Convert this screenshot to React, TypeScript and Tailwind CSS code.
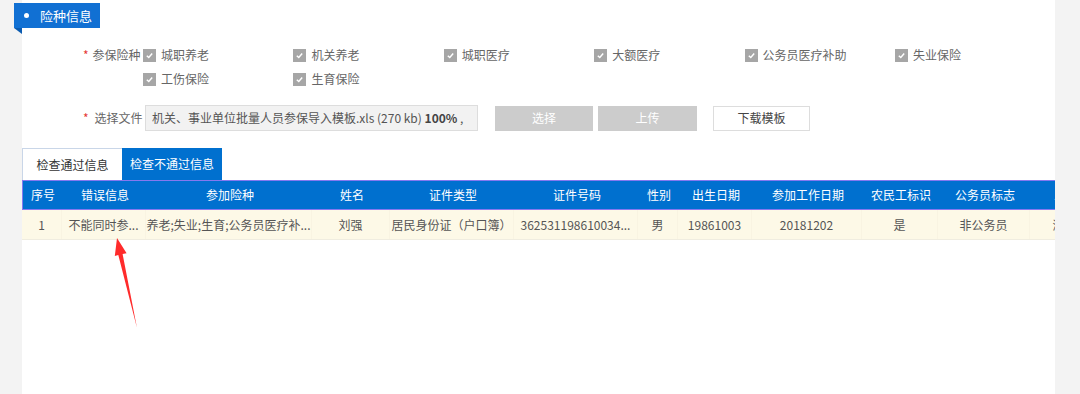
import React from 'react'

const kinds = ['城职养老', '机关养老', '城职医疗', '大额医疗', '公务员医疗补助', '失业保险', '工伤保险', '生育保险']

const cols = [
    { title: '序号', w: 'w-[40px]' },
    { title: '错误信息', w: 'w-[84px]' },
    { title: '参加险种', w: 'w-[166px]' },
    { title: '姓名', w: 'w-[78px]' },
    { title: '证件类型', w: 'w-[124px]' },
    { title: '证件号码', w: 'w-[124px]' },
    { title: '性别', w: 'w-[40px]' },
    { title: '出生日期', w: 'w-[74px]' },
    { title: '参加工作日期', w: 'w-[110px]' },
    { title: '农民工标识', w: 'w-[76px]' },
    { title: '公务员标志', w: 'w-[92px]' },
    { title: '人员类别', w: 'w-[94px]' },
]

const row = ['1', '不能同时参...', '养老;失业;生育;公务员医疗补...', '刘强', '居民身份证（户口簿）', '362531198610034...', '男', '19861003', '20181202', '是', '非公务员', '浏览详情']

const Check = ({ label }: { label: string }) => (
    <div className="flex items-center h-[24px]">
        <span className="w-[13px] h-[13px] bg-[#a6a6a6] flex items-center justify-center">
            <svg width="9" height="9" viewBox="0 0 10 10">
                <path d="M2 5.2 L4.2 7.3 L8 2.8" stroke="#fff" strokeWidth="1.6" fill="none" />
            </svg>
        </span>
        <span className="ml-[5px] text-[12px] text-[#666]">{label}</span>
    </div>
)

const App = () => {
    return (
        <div className="flex h-[394px] w-[1080px] overflow-hidden font-['Noto_Sans_CJK_SC',sans-serif] bg-[#f3f3f3]">
            <div className="w-[22px] shrink-0"></div>
            <div className="relative w-[1033px] bg-white">
                {/* title */}
                <div className="ml-[-8px] mt-[3px]">
                    <div className="flex items-center h-[25px] w-[86px] bg-[#1170d3] text-white">
                        <span className="ml-[10px] w-[5px] h-[5px] rounded-full bg-white"></span>
                        <span className="ml-[11px] text-[13px]">险种信息</span>
                    </div>
                    <div className="w-0 h-0 border-l-[8px] border-l-transparent border-t-[6px] border-t-[#0b5bb0]"></div>
                </div>

                <div className="flex mt-[9px] pl-[61px]">
                    <div className="flex h-[24px] items-center text-[12px] w-[60px]">
                        <span className="text-[#e53935] mr-[4px]">*</span>
                        <span className="text-[#666]">参保险种</span>
                    </div>
                    <div className="grid grid-cols-[repeat(6,150.4px)]">
                        {kinds.map(k => <Check key={k} label={k} />)}
                    </div>
                </div>

                <div className="flex items-center mt-[14px] pl-[61px]">
                    <div className="flex items-center text-[12px] w-[62px]">
                        <span className="text-[#e53935] mr-[6px]">*</span>
                        <span className="text-[#666]">选择文件</span>
                    </div>
                    <div className="w-[333px] h-[26px] border border-[#ddd] bg-[#f2f2f2] flex items-center pl-[6px] text-[12px] text-[#555]">
                        机关、事业单位批量人员参保导入模板.xls (270 kb)&nbsp;<b className="text-[#444]">100%</b>&nbsp;,
                    </div>
                    <button className="ml-[17px] w-[98px] h-[25px] bg-[#cccccc] text-white text-[12px]">选择</button>
                    <button className="ml-[5px] w-[99px] h-[25px] bg-[#cccccc] text-white text-[12px]">上传</button>
                    <button className="ml-[16px] w-[97px] h-[25px] bg-white border border-[#ddd] text-[#444] text-[12px]">下载模板</button>
                </div>

                {/* tabs */}
                <div className="flex mt-[17px] h-[32px] text-[12px]">
                    <div className="w-[100px] flex items-center justify-center border-t border-l border-[#c9d6e8] text-[#333]">检查通过信息</div>
                    <div className="w-[100px] flex items-center justify-center bg-[#0070cf] text-white">检查不通过信息</div>
                </div>

                {/* table */}
                <div className="overflow-hidden">
                    <div className="flex w-max h-[30px] bg-[#0070cf] border border-[#8578f0] text-white text-[12px]">
                        {cols.map(c => (
                            <div key={c.title} className={`${c.w} shrink-0 flex items-center justify-center whitespace-nowrap`}>{c.title}</div>
                        ))}
                    </div>
                    <div className="flex w-max h-[30px] bg-[#fdf9e7] border-b border-[#f0ede0] text-[#555] text-[12px]">
                        {row.map((t, i) => (
                            <div key={i} className={`${cols[i].w} shrink-0 flex items-center justify-center whitespace-nowrap border-r border-[#f9f4e2]`}>{t}</div>
                        ))}
                    </div>
                </div>

                {/* annotation arrow */}
                <svg className="absolute left-0 top-0 pointer-events-none" width="1033" height="394">
                    <polygon points="95,238 104.6,253.3 100.6,254 115,328 96.3,255.1 92.8,255.9" fill="#ff2b2b" />
                </svg>
            </div>
            <div className="flex-1"></div>
        </div>
    )
}

export default App
